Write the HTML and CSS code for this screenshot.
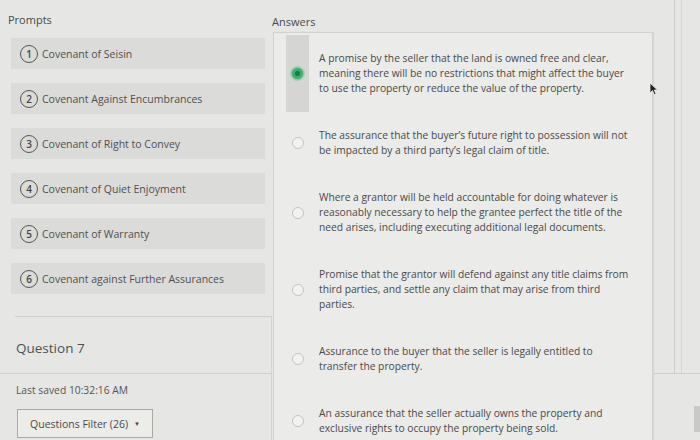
FILE: index.html
```html
<!DOCTYPE html>
<html lang="en">
<head>
<meta charset="utf-8">
<title>Matching question</title>
<link rel="stylesheet" href="styles.css">
</head>
<body>
<div class="page">
  <aside class="prompts">
    <h2 class="label">Prompts</h2>
    <ul class="prompt-list">
      <li class="prompt"><span class="num">1</span><span class="ptext">Covenant of Seisin</span></li>
      <li class="prompt"><span class="num">2</span><span class="ptext">Covenant Against Encumbrances</span></li>
      <li class="prompt"><span class="num">3</span><span class="ptext">Covenant of Right to Convey</span></li>
      <li class="prompt"><span class="num">4</span><span class="ptext">Covenant of Quiet Enjoyment</span></li>
      <li class="prompt"><span class="num">5</span><span class="ptext">Covenant of Warranty</span></li>
      <li class="prompt"><span class="num">6</span><span class="ptext">Covenant against Further Assurances</span></li>
    </ul>
    <div class="bottom">
      <div class="question">Question 7</div>
      <div class="meta">
        <div class="saved">Last saved 10:32:16 AM</div>
        <button class="filter">Questions Filter (26) <span class="caret">&#9660;</span></button>
      </div>
    </div>
  </aside>
  <main class="answers">
    <h2 class="label">Answers</h2>
    <div class="card">
      <div class="answer selected">
        <div class="radio-col"><span class="radio on"></span></div>
        <p class="atext">A promise by the seller that the land is owned free and clear, meaning there will be no restrictions that might affect the buyer to use the property or reduce the value of the property.</p>
      </div>
      <div class="answer">
        <div class="radio-col"><span class="radio"></span></div>
        <p class="atext">The assurance that the buyer’s future right to possession will not be impacted by a third party’s legal claim of title.</p>
      </div>
      <div class="answer">
        <div class="radio-col"><span class="radio"></span></div>
        <p class="atext">Where a grantor will be held accountable for doing whatever is reasonably necessary to help the grantee perfect the title of the need arises, including executing additional legal documents.</p>
      </div>
      <div class="answer">
        <div class="radio-col"><span class="radio"></span></div>
        <p class="atext">Promise that the grantor will defend against any title claims from third parties, and settle any claim that may arise from third parties.</p>
      </div>
      <div class="answer">
        <div class="radio-col"><span class="radio"></span></div>
        <p class="atext">Assurance to the buyer that the seller is legally entitled to transfer the property.</p>
      </div>
      <div class="answer">
        <div class="radio-col"><span class="radio"></span></div>
        <p class="atext">An assurance that the seller actually owns the property and exclusive rights to occupy the property being sold.</p>
      </div>
    </div>
    <svg class="cursor" width="10" height="14" viewBox="0 0 10 14"><path d="M1 1 L1 11 L3.5 8.6 L5.3 12.6 L7 11.8 L5.2 8 L8.5 8 Z" fill="#222" stroke="#eee" stroke-width="0.8"/></svg>
  </main>
  <div class="edge">
    <div class="edge-top"></div>
    <div class="edge-bottom"><span class="edge-tab"></span></div>
  </div>
</div>
</body>
</html>
```

FILE: styles.css
```css
* { box-sizing: border-box; }
html, body { margin: 0; padding: 0; }
body {
  width: 700px;
  height: 440px;
  overflow: hidden;
  background: #e6e6e4;
  font-family: "Open Sans", "Liberation Sans", sans-serif;
  color: #4a4a4a;
}
.page {
  display: grid;
  grid-template-columns: 272px 382px 1fr;
  height: 440px;
}
.label {
  margin: 0;
  font-size: 11px;
  font-weight: 400;
  line-height: 14px;
  color: #4a4a4a;
}
.prompts { display: flex; flex-direction: column; }
.prompts .label { padding: 13px 0 0 8px; }
.prompt-list {
  list-style: none;
  margin: 11px 0 0 11px;
  padding: 0;
  width: 254px;
  display: flex;
  flex-direction: column;
  gap: 14px;
}
.prompt {
  height: 31px;
  background: #dbdbd9;
  display: flex;
  align-items: center;
  gap: 4px;
  padding-left: 9px;
  font-size: 10.5px;
  color: #505050;
}
.num {
  width: 18px;
  height: 18px;
  border: 1.6px solid #555;
  border-radius: 50%;
  display: flex;
  align-items: center;
  justify-content: center;
  font-size: 10px;
  font-weight: 600;
  color: #444;
}
.bottom {
  margin-top: 22px;
  flex: 1;
  display: flex;
  flex-direction: column;
}
.question {
  margin-left: 15px;
  border-top: 1px solid #cfcfcd;
  border-right: 1px solid #d4d4d2;
  height: 57px;
  padding: 23px 0 0 1px;
  font-size: 13.5px;
  line-height: 16px;
  color: #505050;
}
.meta {
  border-top: 1px solid #d0d0ce;
  border-right: 1px solid #d4d4d2;
  flex: 1;
  padding: 10px 0 0 16px;
}
.saved {
  font-size: 10.3px;
  line-height: 13px;
  color: #555;
}
.filter {
  margin-top: 12px;
  margin-left: 1px;
  width: 136px;
  height: 29px;
  border: 1px solid #a9a9a7;
  background: #ecece9;
  font-family: inherit;
  font-size: 10.5px;
  color: #4a4a4a;
  padding: 0;
  display: flex;
  align-items: center;
  justify-content: center;
  gap: 6px;
}
.caret { font-size: 6px; color: #444; }
.answers { position: relative; display: flex; flex-direction: column; }
.answers .label { padding: 15px 0 0 0; height: 32px; }
.card {
  margin-left: 1px;
  width: 380px;
  flex: 1;
  background: #ebebe9;
  border: 1px solid #d2d2d0;
  border-bottom: none;
  box-shadow: 1px 0 1px rgba(0,0,0,0.06);
  padding: 2px 0 0 12px;
}
.answer {
  display: flex;
  align-items: stretch;
  gap: 10px;
}
.radio-col {
  width: 23px;
  flex: none;
  display: flex;
  align-items: center;
  justify-content: center;
}
.selected .radio-col { background: #d5d5d3; }
.radio {
  width: 12px;
  height: 12px;
  border-radius: 50%;
  border: 1px solid #c4c4c2;
  background: #f2f2f0;
}
.radio.on {
  width: 13px;
  height: 13px;
  background: radial-gradient(circle, #1f7a46 0 2.3px, #3fae6f 2.9px);
  border: 1px solid #7cc79b;
  box-shadow: 0 0 0 1px rgba(63,174,111,0.25);
}
.atext {
  margin: 0;
  padding: 16px 0;
  width: 313px;
  font-size: 10.25px;
  line-height: 15px;
  color: #4a4a4a;
}
.cursor { position: absolute; left: 377px; top: 82px; }
.edge { display: flex; flex-direction: column; }
.edge-top {
  height: 373px;
  margin-left: 20px;
  border-left: 1px solid #cdcdcb;
  border-right: 1px solid #d6d6d4;
  width: 8px;
}
.edge-bottom {
  flex: 1;
  border-top: 1px solid #cdcdcb;
  display: flex;
  justify-content: flex-end;
  padding-top: 32px;
}
.edge-tab {
  width: 6px;
  height: 26px;
  background: #c9c9c7;
}
```
